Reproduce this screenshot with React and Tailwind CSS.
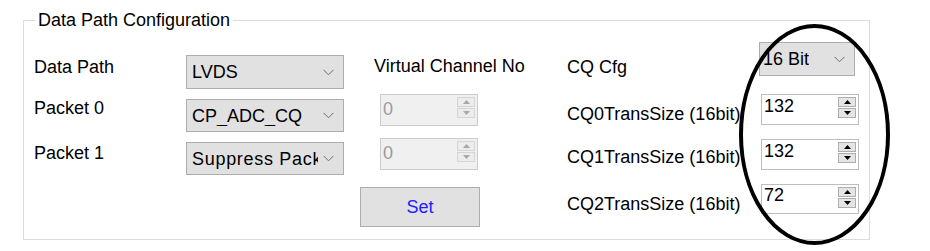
import React from 'react';

const Chevron = () => (
  <svg width="11" height="7" viewBox="0 0 11 7" className="shrink-0">
    <polyline points="0.5,0.8 5.5,5.8 10.5,0.8" fill="none" stroke="#6d6d6d" strokeWidth="1" />
  </svg>
);

const Combo = ({ label, className, textClass = '' }) => (
  <div className={`flex items-center justify-between border border-[#adadad] bg-[#e1e1e1] pl-[5px] pr-[9px] ${className}`}>
    <span className={`whitespace-nowrap overflow-hidden leading-[20px] ${textClass}`}>{label}</span>
    <Chevron />
  </div>
);

const SpinArrow = ({ up, disabled }) => (
  <div
    className={`flex items-center justify-center w-[18px] h-[10px] border ${
      disabled ? 'border-[#d6d6d6] bg-[#ececec]' : 'border-[#adadad] bg-[#e5e5e5]'
    }`}
  >
    <svg width="7" height="4" viewBox="0 0 7 4">
      <polygon points={up ? '0,4 7,4 3.5,0' : '0,0 7,0 3.5,4'} fill={disabled ? '#a8a8a8' : '#000'} />
    </svg>
  </div>
);

const Spin = ({ value, disabled, className, textClass }) => (
  <div
    className={`flex items-start justify-between border ${
      disabled ? 'border-[#cccccc] bg-[#f0f0f0] text-[#9b9b9b]' : 'border-[#bdbdbd] bg-white text-black'
    } ${className}`}
  >
    <span className={`pl-[2px] leading-[20px] ${textClass}`}>{value}</span>
    <div className="flex flex-col gap-[1px] mt-[2px] mr-[2px]">
      <SpinArrow up disabled={disabled} />
      <SpinArrow disabled={disabled} />
    </div>
  </div>
);

export default function App() {
  return (
    <div className="relative w-[930px] h-[251px] bg-white overflow-hidden font-['Liberation_Sans',Arial,sans-serif] text-[18px] text-black">
      <div className="relative ml-[23px] mt-[20px] w-[847px] h-[220px] border border-[#dcdcdc]">
        <div className="absolute -top-[11px] left-[11px] bg-white px-[3px] leading-[20px]">
          Data Path Configuration
        </div>

        <div className="flex">
          {/* labels */}
          <div className="flex flex-col w-[162px] pl-[10px] leading-[20px]">
            <div className="mt-[36px]">Data Path</div>
            <div className="mt-[21px]">Packet 0</div>
            <div className="mt-[25px]">Packet 1</div>
          </div>

          {/* combos */}
          <div className="flex flex-col w-[158px]">
            <Combo label="LVDS" className="mt-[34px] h-[34px]" />
            <Combo label="CP_ADC_CQ" className="mt-[10px] h-[33px]" />
            <Combo label="Suppress Packet" className="mt-[10px] h-[33px]" textClass="w-[126px] tracking-[0.7px]" />
          </div>

          {/* virtual channel */}
          <div className="flex flex-col w-[120px] ml-[16px]">
            <div className="mt-[35px] ml-[14px] leading-[20px] whitespace-nowrap">Virtual Channel No</div>
            <Spin value="0" disabled className="mt-[18px] ml-[20px] w-[98px] h-[32px]" textClass="pt-[4px]" />
            <Spin value="0" disabled className="mt-[12px] ml-[20px] w-[98px] h-[32px]" textClass="pt-[4px]" />
            <button className="mt-[17px] h-[40px] w-[120px] border border-[#adadad] bg-[#e1e1e1] text-[#2020ff] leading-[20px]">
              Set
            </button>
          </div>

          {/* cq labels */}
          <div className="flex flex-col w-[192px] ml-[87px] leading-[20px] whitespace-nowrap">
            <div className="mt-[36px]">CQ Cfg</div>
            <div className="mt-[27px]">CQ0TransSize (16bit)</div>
            <div className="mt-[23px]">CQ1TransSize (16bit)</div>
            <div className="mt-[27px]">CQ2TransSize (16bit)</div>
          </div>

          {/* cq controls */}
          <div className="flex flex-col">
            <Combo label="16 Bit" className="mt-[21px] h-[34px] w-[96px] !pl-[3px]" />
            <Spin value="132" className="mt-[18px] ml-[2px] w-[98px] h-[31px]" textClass="pt-[1px]" />
            <Spin value="132" className="mt-[14px] ml-[2px] w-[98px] h-[31px]" textClass="pt-[1px]" />
            <Spin value="72" className="mt-[14px] ml-[2px] w-[98px] h-[30px]" textClass="pt-[0px]" />
          </div>
        </div>
      </div>

      {/* hand-drawn highlight ellipse */}
      <svg className="absolute left-[736px] top-[21px]" width="158" height="228" viewBox="0 0 158 228">
        <ellipse cx="78.5" cy="113.5" rx="73.5" ry="108.5" fill="none" stroke="#000" strokeWidth="4" />
      </svg>
    </div>
  );
}
